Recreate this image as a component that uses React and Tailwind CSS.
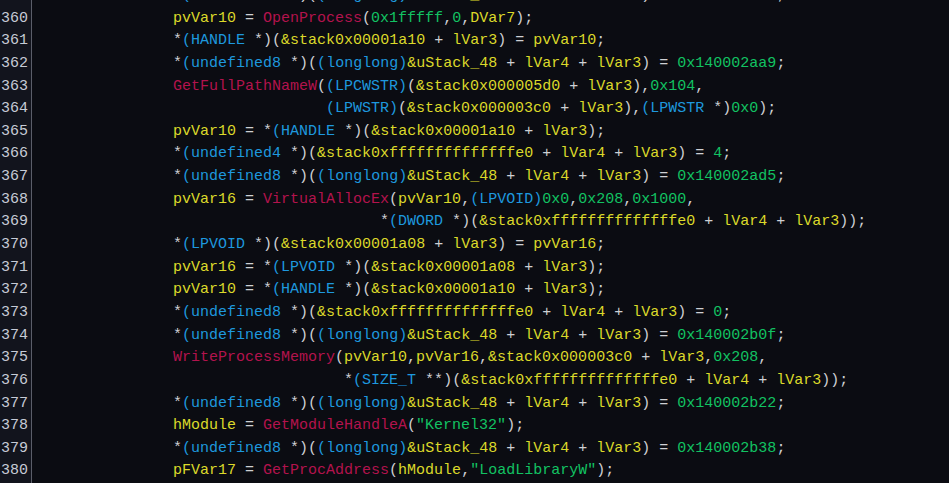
import React from "react";

const LINES = [
  [359, "*(undefined8 *)((longlong)&uStack_48 + lVar4 + lVar3) = 0x140002a8e;"],
  [360, "pvVar10 = OpenProcess(0x1fffff,0,DVar7);"],
  [361, "*(HANDLE *)(&stack0x00001a10 + lVar3) = pvVar10;"],
  [362, "*(undefined8 *)((longlong)&uStack_48 + lVar4 + lVar3) = 0x140002aa9;"],
  [363, "GetFullPathNameW((LPCWSTR)(&stack0x000005d0 + lVar3),0x104,"],
  [364, "                 (LPWSTR)(&stack0x000003c0 + lVar3),(LPWSTR *)0x0);"],
  [365, "pvVar10 = *(HANDLE *)(&stack0x00001a10 + lVar3);"],
  [366, "*(undefined4 *)(&stack0xffffffffffffffe0 + lVar4 + lVar3) = 4;"],
  [367, "*(undefined8 *)((longlong)&uStack_48 + lVar4 + lVar3) = 0x140002ad5;"],
  [368, "pvVar16 = VirtualAllocEx(pvVar10,(LPVOID)0x0,0x208,0x1000,"],
  [369, "                       *(DWORD *)(&stack0xffffffffffffffe0 + lVar4 + lVar3));"],
  [370, "*(LPVOID *)(&stack0x00001a08 + lVar3) = pvVar16;"],
  [371, "pvVar16 = *(LPVOID *)(&stack0x00001a08 + lVar3);"],
  [372, "pvVar10 = *(HANDLE *)(&stack0x00001a10 + lVar3);"],
  [373, "*(undefined8 *)(&stack0xffffffffffffffe0 + lVar4 + lVar3) = 0;"],
  [374, "*(undefined8 *)((longlong)&uStack_48 + lVar4 + lVar3) = 0x140002b0f;"],
  [375, "WriteProcessMemory(pvVar10,pvVar16,&stack0x000003c0 + lVar3,0x208,"],
  [376, "                   *(SIZE_T **)(&stack0xffffffffffffffe0 + lVar4 + lVar3));"],
  [377, "*(undefined8 *)((longlong)&uStack_48 + lVar4 + lVar3) = 0x140002b22;"],
  [378, "hModule = GetModuleHandleA(\"Kernel32\");"],
  [379, "*(undefined8 *)((longlong)&uStack_48 + lVar4 + lVar3) = 0x140002b38;"],
  [380, "pFVar17 = GetProcAddress(hModule,\"LoadLibraryW\");"],
  [381, ""],
];

const FUNCS = new Set([
  "OpenProcess",
  "GetFullPathNameW",
  "VirtualAllocEx",
  "WriteProcessMemory",
  "GetModuleHandleA",
  "GetProcAddress",
]);
const TYPES = new Set([
  "HANDLE",
  "undefined8",
  "undefined4",
  "longlong",
  "LPCWSTR",
  "LPWSTR",
  "LPVOID",
  "DWORD",
  "SIZE_T",
]);

const COLOR = {
  fn: "text-[#b3134d]",
  type: "text-[#1e98de]",
  num: "text-[#12c262]",
  var: "text-[#dcd92a]",
  punct: "text-[#cfd0d4]",
  ws: "",
};

function tokenize(src) {
  const re = /("[^"]*")|(0x[0-9a-fA-F]+\b|\d+\b)|(&?[A-Za-z_][A-Za-z0-9_]*)|(\s+)|(.)/g;
  const out = [];
  let m;
  while ((m = re.exec(src))) {
    if (m[1]) out.push({ t: m[1], k: "num" });
    else if (m[2]) out.push({ t: m[2], k: "num" });
    else if (m[3]) {
      const w = m[3];
      if (FUNCS.has(w)) out.push({ t: w, k: "fn" });
      else if (TYPES.has(w)) out.push({ t: w, k: "type" });
      else out.push({ t: w, k: "var" });
    } else if (m[4]) out.push({ t: m[4], k: "ws" });
    else out.push({ t: m[5], k: "punct" });
  }
  for (let i = 0; i < out.length; i++) {
    if (out[i].k === "type") {
      if (i > 0 && out[i - 1].t === "(") out[i - 1].k = "type";
      if (i + 1 < out.length && out[i + 1].t === ")") out[i + 1].k = "type";
    }
  }
  return out;
}

function CodeLine({ src }) {
  return (
    <span className="whitespace-pre">
      {tokenize(src).map((tk, i) => (
        <span key={i} className={COLOR[tk.k]}>
          {tk.t}
        </span>
      ))}
    </span>
  );
}

export default function App() {
  return (
    <div className="w-[949px] h-[483px] overflow-hidden bg-[#0b0c12] font-['Liberation_Mono',monospace] text-[15px]">
      <div className="-mt-[15px] flex flex-col">
        {LINES.map(([n, src]) => (
          <div key={n} className="flex h-[22.65px] leading-[22.65px]">
            <div className="w-[30px] shrink-0 bg-[#12141d] border-r border-[#5b5e69] pl-[1px] text-[#c6cbd6] box-content">
              {n}
            </div>
            <div className="pl-[141px] whitespace-pre">
              <CodeLine src={src} />
            </div>
          </div>
        ))}
      </div>
    </div>
  );
}
